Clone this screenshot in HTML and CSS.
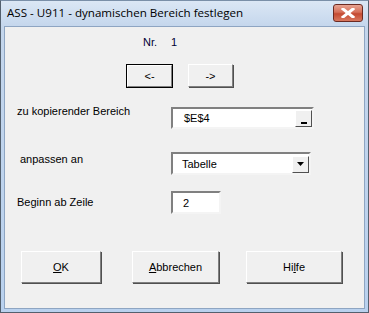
FILE: index.html
```html
<!DOCTYPE html>
<html>
<head>
<meta charset="utf-8">
<link rel="stylesheet" href="styles.css">
</head>
<body>
<div class="window">
  <div class="titlebar">
    <span class="title">ASS - U911 - dynamischen Bereich festlegen</span>
    <span class="close">
      <svg width="14" height="10" viewBox="0 0 14 10"><path d="M2 1 L12 9 M12 1 L2 9" stroke="#ffffff" stroke-width="3" stroke-linecap="square"/></svg>
    </span>
  </div>
  <div class="client">
    <div class="nr-row"><span>Nr.</span><span class="nr-val">1</span></div>
    <div class="nav-row">
      <button class="btn nav default">&lt;-</button>
      <button class="btn nav">-&gt;</button>
    </div>
    <div class="field-row range-row">
      <span class="label">zu kopierender Bereich</span>
      <div class="sunken range">
        <span class="val">$E$4</span>
        <span class="mini"><span class="underscore"></span></span>
      </div>
    </div>
    <div class="field-row adapt-row">
      <span class="label label-adapt">anpassen an</span>
      <div class="sunken combo">
        <span class="val">Tabelle</span>
        <span class="mini arrow"><svg width="7" height="4" viewBox="0 0 7 4"><path d="M0 0 H7 L3.5 4 Z" fill="#000"/></svg></span>
      </div>
    </div>
    <div class="field-row start-row">
      <span class="label">Beginn ab Zeile</span>
      <div class="sunken small"><span class="val">2</span></div>
    </div>
    <div class="actions">
      <button class="btn action ok"><u>O</u>K</button>
      <button class="btn action cancel"><u>A</u>bbrechen</button>
      <button class="btn action help">Hi<u>l</u>fe</button>
    </div>
  </div>
</div>
</body>
</html>
```

FILE: styles.css
```css
html, body {
  margin: 0;
  padding: 0;
  width: 369px;
  height: 313px;
  overflow: hidden;
  background: #f0f0f0;
}
.window {
  box-sizing: border-box;
  width: 369px;
  height: 313px;
  border: 1px solid #53606e;
  border-top-color: #7a8fa8;
  background: linear-gradient(#dbe7f5, #c4d6ec 26px, #b9d1ee);
  padding: 0 3px 3px 3px;
  display: flex;
  flex-direction: column;
}
.titlebar {
  height: 25px;
  display: flex;
  align-items: center;
  justify-content: space-between;
  padding: 0 1px 0 3px;
}
.title {
  font-family: "Open Sans", sans-serif;
  font-size: 11.6px;
  color: #000;
  margin-top: -2px;
}
.close {
  width: 30px;
  height: 18px;
  box-sizing: border-box;
  border: 1px solid #6b2a22;
  border-radius: 3px;
  background: linear-gradient(#e8a493, #d56f59 45%, #c44a32 55%, #d9785f);
  display: flex;
  align-items: center;
  justify-content: center;
  margin-top: -2px;
  margin-right: 1px;
}
.client {
  flex: 1;
  background: #f0f0f0;
  border: 1px solid #8ea5c2;
  font-family: "Liberation Sans", sans-serif;
  font-size: 11px;
  color: #000;
}
.nr-row {
  display: flex;
  padding-left: 138px;
  margin-top: 9px;
  height: 14px;
  font-size: 11px;
  color: #000033;
}
.nr-val { margin-left: 14px; }
.btn {
  font-family: "Liberation Sans", sans-serif;
  font-size: 11px;
  color: #000;
  background: #f0f0f0;
  border: 1px solid;
  border-color: #ffffff #808080 #808080 #ffffff;
  box-shadow: 1px 1px 0 #505050;
  padding: 0;
  margin: 0;
}
.nav-row {
  display: flex;
  padding-left: 122px;
  margin-top: 14px;
  gap: 16px;
}
.nav {
  width: 45px;
  height: 23px;
}
.nav.default {
  outline: 1px solid #000;
  width: 45px;
  height: 22px;
  margin-top: 1px;
}
.field-row {
  display: flex;
  align-items: flex-start;
}
.label {
  font-size: 11px;
  width: 166px;
  padding-left: 12px;
  box-sizing: border-box;
}
.label-adapt { padding-left: 15px; }
.range-row { margin-top: 20px; }
.range-row .label { margin-top: -2px; }
.sunken {
  box-sizing: border-box;
  background: #fff;
  border: 2px solid;
  border-color: #808080 #f4f4f4 #f4f4f4 #808080;
  display: flex;
  align-items: center;
  font-size: 11px;
}
.sunken .val { padding-left: 11px; flex: 1; }
.range { width: 143px; height: 22px; }
.mini {
  width: 17px;
  height: 17px;
  box-sizing: border-box;
  background: #f0f0f0;
  border: 1px solid;
  border-color: #fff #505050 #505050 #fff;
  display: flex;
  align-items: flex-end;
  justify-content: center;
  margin-top: 1px;
}
.underscore {
  width: 6px;
  height: 2px;
  background: #000;
  margin-bottom: 2px;
}
.combo .val { padding-left: 9px; }
.adapt-row { margin-top: 23px; }
.adapt-row .label { margin-top: 1px; }
.combo { width: 140px; height: 23px; }
.arrow { align-items: center; }
.start-row { margin-top: 16px; }
.start-row .label { margin-top: 5px; }
.small { width: 50px; height: 23px; }
.small .val { padding-left: 10px; }
.actions {
  display: flex;
  margin-top: 37px;
  padding-left: 16px;
}
.action { height: 32px; }
.ok { width: 80px; }
.cancel { width: 87px; margin-left: 31px; }
.help { width: 96px; margin-left: 27px; }
u { text-decoration: underline; text-underline-offset: 1px; }
```
